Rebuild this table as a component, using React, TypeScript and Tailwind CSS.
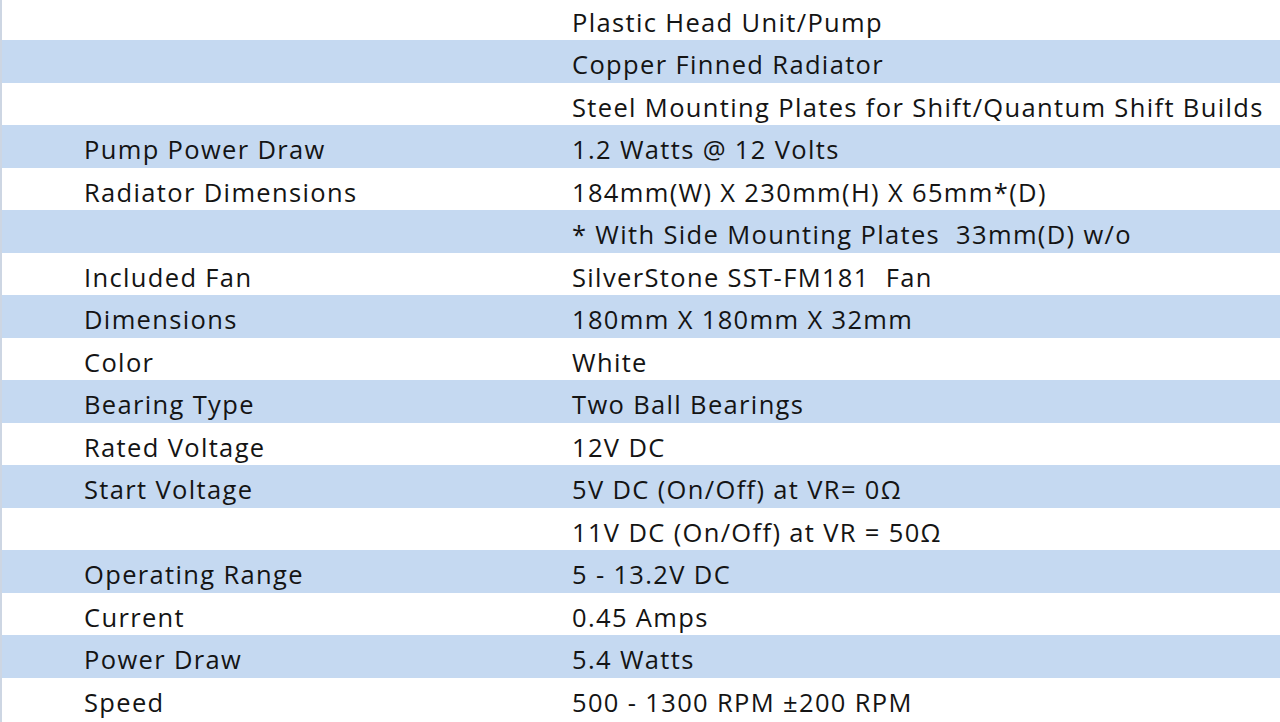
import React from 'react';

interface SpecRow {
  label: string;
  value: string;
}

const rows: SpecRow[] = [
  { label: '', value: 'Plastic Head Unit/Pump' },
  { label: '', value: 'Copper Finned Radiator' },
  { label: '', value: 'Steel Mounting Plates for Shift/Quantum Shift Builds' },
  { label: 'Pump Power Draw', value: '1.2 Watts @ 12 Volts' },
  { label: 'Radiator Dimensions', value: '184mm(W) X 230mm(H) X 65mm*(D)' },
  { label: '', value: '* With Side Mounting Plates\u00a0 33mm(D) w/o' },
  { label: 'Included Fan', value: 'SilverStone SST-FM181\u00a0 Fan' },
  { label: 'Dimensions', value: '180mm X 180mm X 32mm' },
  { label: 'Color', value: 'White' },
  { label: 'Bearing Type', value: 'Two Ball Bearings' },
  { label: 'Rated Voltage', value: '12V DC' },
  { label: 'Start Voltage', value: '5V DC (On/Off) at VR= 0Ω' },
  { label: '', value: '11V DC (On/Off) at VR = 50Ω' },
  { label: 'Operating Range', value: '5 - 13.2V DC' },
  { label: 'Current', value: '0.45 Amps' },
  { label: 'Power Draw', value: '5.4 Watts' },
  { label: 'Speed', value: '500 - 1300 RPM ±200 RPM' },
];

const App: React.FC = () => {
  return (
    <div className="w-[1280px] h-[722px] overflow-hidden bg-white flex">
      <div className="w-[2px] bg-[#cdd6e3] shrink-0" />
      <div className="flex-1 flex flex-col -mt-[2.5px] text-[#141414] text-[25.5px] tracking-[1.35px] font-['Open_Sans','Liberation_Sans',sans-serif]">
        {rows.map((row, i) => (
          <div
            key={i}
            className={`h-[42.5px] shrink-0 flex items-end pb-[5px] leading-none ${
              i % 2 === 1 ? 'bg-[#c5d9f1]' : 'bg-white'
            }`}
          >
            <div className="w-[570px] shrink-0 pl-[82px] whitespace-nowrap">{row.label}</div>
            <div className="whitespace-nowrap">{row.value}</div>
          </div>
        ))}
      </div>
    </div>
  );
};

export default App;
